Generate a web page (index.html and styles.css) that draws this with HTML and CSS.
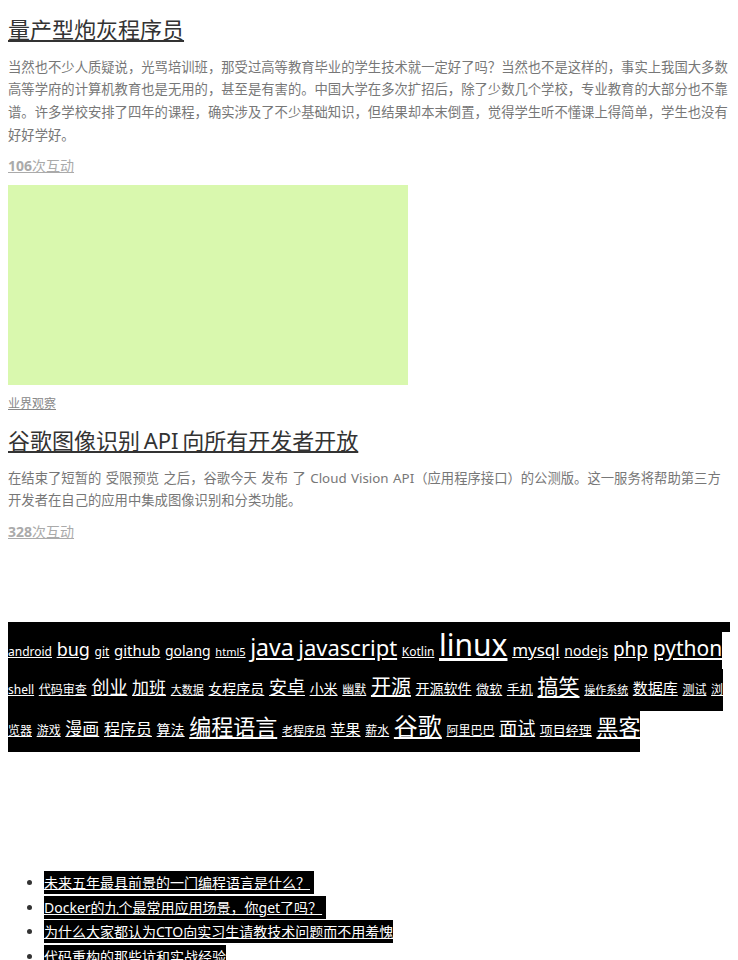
FILE: index.html
```html
<!DOCTYPE html>
<html lang="zh-CN">
<head>
<meta charset="utf-8">
<title>资讯</title>
<link rel="stylesheet" href="styles.css">
</head>
<body>
<div class="page">
  <article class="post">
    <h2 class="post-title"><a href="#">量产型炮灰程序员</a></h2>
    <p class="post-excerpt">当然也不少人质疑说，光骂培训班，那受过高等教育毕业的学生技术就一定好了吗？当然也不是这样的，事实上我国大多数高等学府的计算机教育也是无用的，甚至是有害的。中国大学在多次扩招后，除了少数几个学校，专业教育的大部分也不靠谱。许多学校安排了四年的课程，确实涉及了不少基础知识，但结果却本末倒置，觉得学生听不懂课上得简单，学生也没有好好学好。</p>
    <div class="post-meta"><a href="#"><b>106</b>次互动</a></div>
  </article>
  <article class="post">
    <div class="thumb"></div>
    <div class="post-cat"><a href="#">业界观察</a></div>
    <h2 class="post-title"><a href="#">谷歌图像识别 API 向所有开发者开放</a></h2>
    <p class="post-excerpt">在结束了短暂的 受限预览 之后，谷歌今天 发布 了 Cloud Vision API（应用程序接口）的公测版。这一服务将帮助第三方开发者在自己的应用中集成图像识别和分类功能。</p>
    <div class="post-meta"><a href="#"><b>328</b>次互动</a></div>
  </article>
  <div class="tag-cloud"><span class="tag-bg"><a href="#" style="font-size:12px">android</a> <a href="#" style="font-size:18px">bug</a> <a href="#" style="font-size:12px">git</a> <a href="#" style="font-size:15px">github</a> <a href="#" style="font-size:14px">golang</a> <a href="#" style="font-size:11px">html5</a> <a href="#" style="font-size:23px">java</a> <a href="#" style="font-size:22px">javascript</a> <a href="#" style="font-size:12px">Kotlin</a> <a href="#" style="font-size:30px">linux</a> <a href="#" style="font-size:17px">mysql</a> <a href="#" style="font-size:14px">nodejs</a> <a href="#" style="font-size:19px">php</a> <a href="#" style="font-size:21px">python</a> <a href="#" style="font-size:12px">shell</a> <a href="#" style="font-size:12px">代码审查</a> <a href="#" style="font-size:18px">创业</a> <a href="#" style="font-size:17px">加班</a> <a href="#" style="font-size:11px">大数据</a> <a href="#" style="font-size:14px">女程序员</a> <a href="#" style="font-size:18px">安卓</a> <a href="#" style="font-size:14px">小米</a> <a href="#" style="font-size:12px">幽默</a> <a href="#" style="font-size:20px">开源</a> <a href="#" style="font-size:14px">开源软件</a> <a href="#" style="font-size:13px">微软</a> <a href="#" style="font-size:13px">手机</a> <a href="#" style="font-size:21px">搞笑</a> <a href="#" style="font-size:11px">操作系统</a> <a href="#" style="font-size:15px">数据库</a> <a href="#" style="font-size:12px">测试</a> <a href="#" style="font-size:12px">浏览器</a> <a href="#" style="font-size:12px">游戏</a> <a href="#" style="font-size:17px">漫画</a> <a href="#" style="font-size:16px">程序员</a> <a href="#" style="font-size:14px">算法</a> <a href="#" style="font-size:22px">编程语言</a> <a href="#" style="font-size:11px">老程序员</a> <a href="#" style="font-size:15px">苹果</a> <a href="#" style="font-size:12px">薪水</a> <a href="#" style="font-size:24px">谷歌</a> <a href="#" style="font-size:12px">阿里巴巴</a> <a href="#" style="font-size:18px">面试</a> <a href="#" style="font-size:13px">项目经理</a> <a href="#" style="font-size:22px">黑客</a></span></div>
  <ul class="hot-list">
    <li><span class="item"><a href="#">未来五年最具前景的一门编程语言是什么？</a>&nbsp;</span></li>
    <li><span class="item"><a href="#">Docker的九个最常用应用场景，你get了吗？</a>&nbsp;</span></li>
    <li><span class="item"><a href="#">为什么大家都认为CTO向实习生请教技术问题而不用羞愧</a></span></li>
    <li><span class="item"><a href="#">代码重构的那些坑和实战经验</a></span></li>
  </ul>
</div>
</body>
</html>
```
FILE: styles.css
```css
body {
  margin: 0;
  font-family: "Noto Sans", "Noto Sans CJK SC", sans-serif;
  color: #333;
}

.page {
  padding: 0 8px;
}

.post-title {
  margin: 14px 0 0;
  font-size: 22px;
  line-height: 30px;
  font-weight: normal;
  word-spacing: -2px;
}

.post-cat + .post-title {
  margin-top: 12px;
}

.post-title a {
  color: #333;
}

.post-excerpt {
  margin: 11.5px 0 0;
  font-size: 13.333px;
  line-height: 22.667px;
  color: #777;
  word-spacing: 1px;
}

.post-meta {
  margin-top: 10px;
  font-size: 14px;
  line-height: 20px;
}

.post-meta a {
  color: #aaa;
}

.thumb {
  margin-top: 9px;
  width: 400px;
  height: 200px;
  background: #d9f8ae;
}

.post-cat {
  margin-top: 10px;
  font-size: 12px;
  line-height: 18px;
}

.post-cat a {
  color: #888;
}

.tag-cloud {
  margin-top: 80px;
  font-size: 14px;
  line-height: 38px;
  background: linear-gradient(#000, #000) no-repeat;
  background-size: 100% 10px;
}

.tag-bg {
  background: #000;
  padding: 9.9px 0 13px;
  word-spacing: 1px;
}

.tag-cloud a {
  color: #fff;
  line-height: 1.5;
  word-spacing: 0;
}

.hot-list {
  margin: 122px 0 0;
  padding-left: 36px;
  font-size: 14px;
  line-height: 24.67px;
}

.hot-list .item {
  background: #000;
  padding: 2px 0;
}

.hot-list a {
  color: #fff;
}
```
